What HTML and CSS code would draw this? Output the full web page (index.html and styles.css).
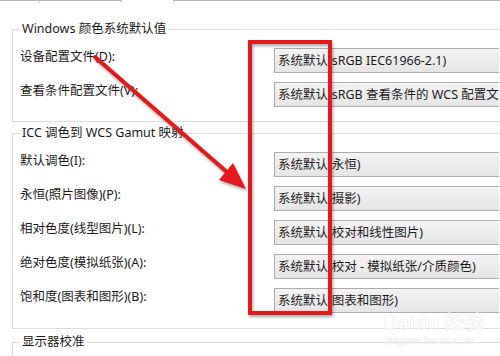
FILE: index.html
```html
<!doctype html>
<html lang="zh-CN">
<head>
    <meta charset="UTF-8">
    <title>颜色管理 - 高级</title>
    <link rel="stylesheet" href="styles.css">
</head>
<body>
    <div class="window">
        <div class="tabs">
            <span class="tab t1"></span>
            <span class="tab t2"></span>
            <span class="tab on"></span>
            <span class="tab rest"></span>
        </div>

        <fieldset class="group g1">
            <legend>Windows 颜色系统默认值</legend>
            <div class="rows">
                <label>设备配置文件(D):</label>
                <div class="combo">系统默认(sRGB IEC61966-2.1)</div>
                <label>查看条件配置文件(V):</label>
                <div class="combo">系统默认(sRGB 查看条件的 WCS 配置文</div>
            </div>
        </fieldset>

        <fieldset class="group g2">
            <legend>ICC 调色到 WCS Gamut 映射</legend>
            <div class="rows">
                <label>默认调色(I):</label>
                <div class="combo">系统默认(永恒)</div>
                <label>永恒(照片图像)(P):</label>
                <div class="combo">系统默认(摄影)</div>
                <label>相对色度(线型图片)(L):</label>
                <div class="combo">系统默认(校对和线性图片)</div>
                <label>绝对色度(模拟纸张)(A):</label>
                <div class="combo">系统默认(校对 - 模拟纸张/介质颜色)</div>
                <label>饱和度(图表和图形)(B):</label>
                <div class="combo">系统默认(图表和图形)</div>
            </div>
        </fieldset>

        <fieldset class="group g3">
            <legend>显示器校准</legend>
        </fieldset>

        <!-- 标注：红框 + 箭头 -->
        <svg class="marks" width="500" height="356" viewBox="0 0 500 356">
            <g class="ink">
                <rect x="250" y="42" width="80" height="271" fill="none" stroke="#e3191c" stroke-width="4"/>
                <line x1="95" y1="57" x2="228" y2="173" stroke="#e3191c" stroke-width="4" stroke-linecap="round"/>
                <polygon points="246,189 219,180 233,163" fill="#e3191c"/>
            </g>
        </svg>

        <div class="watermark">
            <div class="wm-logo">Bai<span class="paw">du</span> 经验</div>
            <div class="wm-url">jingyan.baidu.com</div>
        </div>
    </div>
</body>
</html>
```

FILE: styles.css
```css
* {
    box-sizing: border-box;
}
body {
    margin: 0;
    overflow: hidden;
    background: #fff;
    font-family: "Noto Sans", "Noto Sans CJK SC", sans-serif;
    font-size: 12.5px;
    color: #1b1b1b;
}
.window {
    position: relative;
    width: 500px;
    height: 356px;
    overflow: hidden;
}

/* 顶部选项卡底边 */
.tabs {
    display: flex;
    height: 3px;
}
.tab {
    border-top: 1px solid #b5b5b5;
    border-right: 1px solid #c8c8c8;
}
.t1 { width: 40px; }
.t2 { width: 82px; }
.tab.on {
    width: 52px;
    border-top: none;
}
.rest {
    flex: 1;
    border-right: none;
}

/* 分组框 */
.group {
    margin: 0 -20px 0 12px;
    padding: 11px 0 14px 7px;
    border: 1px solid #dcdcdc;
    min-width: 0;
}
.group legend {
    padding: 0 2px;
    line-height: 16px;
    color: #1b1b1b;
}
.g1 { margin-top: 18px; }
.g2 { margin-top: 3px; padding-bottom: 15px; }
.g3 { margin-top: 5px; height: 60px; }

.rows {
    display: grid;
    grid-template-columns: 254px 1fr;
    row-gap: 9px;
    align-items: start;
}
.rows label {
    line-height: 18px;
    white-space: nowrap;
}
.combo {
    height: 25px;
    margin-right: 20px;
    padding-left: 3px;
    line-height: 23px;
    border: 1px solid #acacac;
    border-right: none;
    background: linear-gradient(#f3f3f3, #e5e5e5);
    white-space: nowrap;
    overflow: hidden;
}

/* 标注层 */
.marks {
    position: absolute;
    left: 0;
    top: 0;
    pointer-events: none;
}
.ink {
    filter: drop-shadow(1px 2px 1.5px rgba(0, 0, 0, 0.35));
}

/* 水印 */
.watermark {
    position: absolute;
    left: 384px;
    top: 312px;
    color: #fff;
    text-shadow: 0 0 1px #c4c4c4, 0 0 1px #c4c4c4;
    opacity: 0.7;
    font-family: "Liberation Sans", "Noto Sans CJK SC", sans-serif;
}
.wm-logo {
    font-size: 19px;
    font-weight: bold;
    line-height: 22px;
    letter-spacing: 0.5px;
}
.wm-url {
    font-size: 11px;
    line-height: 13px;
    padding-left: 2px;
}
```
